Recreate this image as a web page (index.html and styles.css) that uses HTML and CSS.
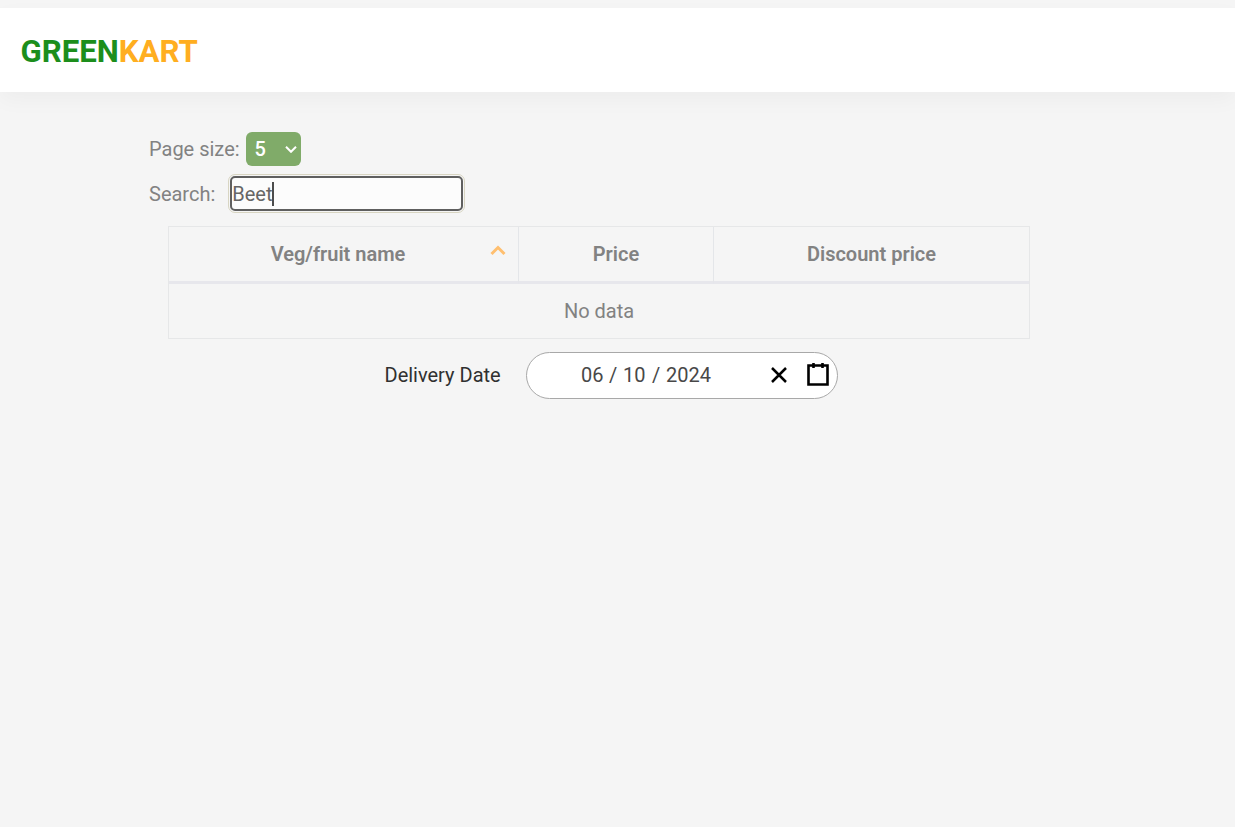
FILE: index.html
```html
<!DOCTYPE html>
<html lang="en">
<head>
<meta charset="utf-8">
<title>GreenKart</title>
<link rel="stylesheet" href="styles.css">
</head>
<body>
<header class="header"><div class="brand"><span class="brand-green">GREEN</span><span class="brand-kart">KART</span></div></header>
<main class="content">
  <div class="filters">
    <div class="field page-size"><span class="label">Page size:</span>
      <div class="select"><span>5</span><svg width="12" height="8" viewBox="0 0 12 8"><path d="M1 1.8 6 6.8 11 1.8" fill="none" stroke="#fff" stroke-width="2"/></svg></div>
    </div>
    <div class="field search"><span class="label search-label">Search:</span>
      <div class="input"><span>Beet</span><i class="caret"></i></div>
    </div>
  </div>
  <table class="table">
    <colgroup><col class="col-name"><col class="col-price"><col class="col-discount"></colgroup>
    <thead><tr>
      <th><div class="sort-head"><span class="sort-text">Veg/fruit name</span><svg class="sort-icon" width="16" height="11" viewBox="0 0 16 11"><path d="M1.5 9 8 2.5 14.5 9" fill="none" stroke="#ffbf6f" stroke-width="3"/></svg></div></th>
      <th>Price</th><th>Discount price</th>
    </tr></thead>
    <tbody><tr><td colspan="3">No data</td></tr></tbody>
  </table>
  <div class="delivery">
    <span class="delivery-label">Delivery Date</span>
    <div class="date-picker">
      <div class="date"><span class="month">06</span><span class="slash">/</span><span class="day">10</span><span class="slash-two">/</span><span class="year">2024</span></div>
      <svg class="clear" width="16" height="16" viewBox="0 0 16 16"><path d="M1 1 15 15M15 1 1 15" stroke="#000" stroke-width="2.5"/></svg>
      <svg class="calendar" width="22" height="24" viewBox="0 0 22 24"><path d="M1.5 2.5h19v19h-19z" fill="none" stroke="#000" stroke-width="2.6"/><path d="M6.5 0v5M15.5 0v5" stroke="#000" stroke-width="2.6"/></svg>
    </div>
  </div>
</main>
</body>
</html>
```
FILE: styles.css
```css
* { box-sizing: border-box; }
body { margin: 0; padding-top: 8px; min-height: 827px; overflow: hidden; background: #f5f5f5; color: #828282; font: 20px/24px Roboto, sans-serif; }
.header { height: 84px; padding: 0 20px; display: flex; align-items: center; background: #fff; box-shadow: 0 8px 20px rgba(0,0,0,.035); }
.brand { font-size: 31.2px; line-height: 36px; font-weight: 700; padding: 3px 0 0 .4px; }
.brand-green { color: #1c8e1c; }
.brand-kart { color: #ffae20; }
.content { padding-top: 40px; }
.filters { padding-left: 149px; display: flex; flex-direction: column; gap: 8px; }
.field { display: flex; align-items: center; }
.label { width: 97px; white-space: nowrap; }
.search-label { width: 79px; padding-top: 2px; }
.select { width: 55px; height: 34px; padding: 0 4px 0 8.5px; display: flex; align-items: center; justify-content: space-between; border-radius: 6px; background: #80ab69; color: #fff; font-weight: 500; }
.search { height: 38px; }
.input { width: 233px; height: 35px; margin: 0 2px; padding: 2px 0 0 .3px; border: 2px solid #5f5f5f; border-radius: 5px; outline: 1px solid #d8d5c2; outline-offset: 1px; background: #fcfcfc; color: #666; display: flex; align-items: center; }
.caret { width: 2px; height: 24px; margin: -1px 0 0 -1px; background: #4c4c4c; }
.table { width: 862px; margin: 14px 0 0 168px; table-layout: fixed; border-collapse: separate; border-spacing: 0; border: 1px solid #e6e7e8; text-align: center; }
.col-name { width: 350px; }
.col-price { width: 195px; }
.table th { height: 57px; padding: 0; font-weight: 600; border-right: 1px solid #e4e6e9; border-bottom: 3px solid #e7e7ec; }
.table th:last-child { border-right: 0; }
.table td { height: 54px; padding: 0; }
.sort-head { display: grid; grid-template-columns: 17px 1fr 28px; align-items: center; }
.sort-text { grid-column: 2; }
.sort-icon { margin-top: -7px; }
.delivery { display: flex; align-items: center; margin-top: 13px; padding-left: 384.5px; color: #303030; }
.delivery-label { width: 141.5px; padding-bottom: 2px; white-space: nowrap; }
.date-picker { width: 312px; height: 47px; display: flex; align-items: center; border: 1px solid #a8a8a8; border-radius: 24px; background: #fff; padding: 0 0 2px 54px; }
.date { display: flex; width: 190px; color: #484848; }
.month { width: 28px; }
.slash { width: 14px; }
.day { width: 29px; }
.slash-two { width: 14px; }
.calendar { margin-left: 20px; }
```
